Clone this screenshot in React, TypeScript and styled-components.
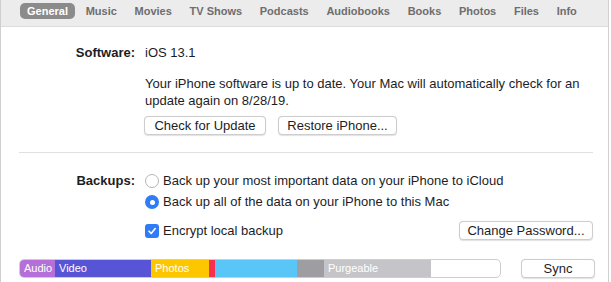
import styled, { createGlobalStyle } from 'styled-components';

const GlobalStyle = createGlobalStyle`
  html, body {
    margin: 0;
    padding: 0;
    background: #ffffff;
  }
  body {
    font-family: 'Liberation Sans', Arial, sans-serif;
    color: #1d1d1f;
  }
`;

const Window = styled.div`
  width: 607px;
  height: 282px;
  border-left: 1px solid #cfcfcf;
  border-right: 1px solid #cfcfcf;
  background: #ffffff;
  overflow: hidden;
`;

const TabBar = styled.div`
  height: 27px;
  background: #ececec;
  border-bottom: 1px solid #dcdcdc;
  display: flex;
  align-items: flex-start;
  padding: 3px 0 0 19px;
  box-sizing: border-box;
  gap: 3.7px;
`;

const Tab = styled.div<{ $active?: boolean }>`
  height: 16px;
  line-height: 16px;
  padding: 0 7px;
  border-radius: 5px;
  font-size: 11px;
  font-weight: bold;
  white-space: nowrap;
  color: ${(p) => (p.$active ? '#ffffff' : '#6e6e6e')};
  background: ${(p) => (p.$active ? '#8b8b8b' : 'transparent')};
`;

const Content = styled.div`
  padding: 0 15px 0 18px;
`;

const Section = styled.div<{ $top?: number }>`
  display: grid;
  grid-template-columns: 116px 1fr;
  column-gap: 10px;
  font-size: 13px;
  margin-top: ${(p) => p.$top ?? 0}px;
`;

const Label = styled.div`
  font-weight: bold;
  text-align: right;
  line-height: 16px;
`;

const Stack = styled.div`
  display: flex;
  flex-direction: column;
`;

const Line = styled.div`
  line-height: 16px;
`;

const Paragraph = styled.div`
  line-height: 17px;
  margin-top: 14px;
`;

const ButtonRow = styled.div`
  display: flex;
  gap: 12px;
  margin-top: 7px;
  margin-left: -1px;
`;

const Button = styled.div<{ $width: number }>`
  width: ${(p) => p.$width}px;
  flex: none;
  height: 19px;
  box-sizing: border-box;
  border: 1px solid #cdcdcd;
  border-radius: 4px;
  background: #ffffff;
  box-shadow: 0 0.5px 1px rgba(0, 0, 0, 0.12);
  font-size: 13px;
  line-height: 17px;
  text-align: center;
  color: #1d1d1f;
`;

const Divider = styled.div`
  height: 1px;
  background: #e0e0e0;
  margin: 17px 0 20px 0;
`;

const OptionRow = styled.div<{ $gap?: number }>`
  display: flex;
  align-items: center;
  gap: 4px;
  height: 16px;
  margin-top: ${(p) => p.$gap ?? 0}px;
  line-height: 16px;
`;

const Radio = styled.div<{ $checked?: boolean }>`
  width: 14px;
  height: 14px;
  box-sizing: border-box;
  border-radius: 50%;
  border: ${(p) => (p.$checked ? 'none' : '1px solid #b5b5b5')};
  background: ${(p) => (p.$checked ? '#2f7cf6' : '#ffffff')};
  display: flex;
  align-items: center;
  justify-content: center;
  &::after {
    content: '';
    display: ${(p) => (p.$checked ? 'block' : 'none')};
    width: 5px;
    height: 5px;
    border-radius: 50%;
    background: #ffffff;
  }
`;

const Check = styled.div`
  width: 14px;
  height: 14px;
  border-radius: 3px;
  background: #2f7cf6;
  display: flex;
  align-items: center;
  justify-content: center;
`;

const EncryptRow = styled.div`
  display: flex;
  align-items: center;
  justify-content: space-between;
  margin-top: 11px;
  height: 19px;
`;

const Footer = styled.div`
  display: flex;
  align-items: center;
  gap: 20px;
  margin-top: 19px;
`;

const Storage = styled.div`
  width: 482px;
  flex: none;
  height: 19px;
  box-sizing: border-box;
  border: 1px solid #cdcdcd;
  border-radius: 5px;
  overflow: hidden;
  display: flex;
  background: #ffffff;
`;

const Segment = styled.div<{ $color: string; $width: number }>`
  width: ${(p) => p.$width}px;
  flex: none;
  background: ${(p) => p.$color};
  color: #ffffff;
  font-size: 11px;
  line-height: 17px;
  padding-left: 4px;
  box-sizing: border-box;
  white-space: nowrap;
  overflow: hidden;
`;

const tabs = ['General', 'Music', 'Movies', 'TV Shows', 'Podcasts', 'Audiobooks', 'Books', 'Photos', 'Files', 'Info'];

const segments = [
  { label: 'Audio', color: '#b46fd8', width: 35 },
  { label: 'Video', color: '#5755d5', width: 96 },
  { label: 'Photos', color: '#fdc700', width: 58 },
  { label: '', color: '#f8304f', width: 6 },
  { label: '', color: '#5ac6f8', width: 82 },
  { label: '', color: '#9d9da2', width: 27 },
  { label: 'Purgeable', color: '#c5c5c9', width: 107 },
];

export default function App() {
  return (
    <Window>
      <GlobalStyle />
      <TabBar>
        {tabs.map((t) => (
          <Tab key={t} $active={t === 'General'}>
            {t}
          </Tab>
        ))}
      </TabBar>
      <Content>
        <Section $top={18}>
          <Label>Software:</Label>
          <Stack>
            <Line>iOS 13.1</Line>
            <Paragraph>
              Your iPhone software is up to date. Your Mac will automatically check for an
              <br />
              update again on 8/28/19.
            </Paragraph>
            <ButtonRow>
              <Button $width={122}>Check for Update</Button>
              <Button $width={119}>Restore iPhone...</Button>
            </ButtonRow>
          </Stack>
        </Section>
        <Divider />
        <Section>
          <Label>Backups:</Label>
          <Stack>
            <OptionRow>
              <Radio />
              <span>Back up your most important data on your iPhone to iCloud</span>
            </OptionRow>
            <OptionRow $gap={5}>
              <Radio $checked />
              <span>Back up all of the data on your iPhone to this Mac</span>
            </OptionRow>
            <EncryptRow>
              <OptionRow>
                <Check>
                  <svg width="10" height="10" viewBox="0 0 10 10">
                    <path d="M2 5.2 L4.2 7.4 L8.2 2.6" fill="none" stroke="#fff" strokeWidth="1.6" strokeLinecap="round" strokeLinejoin="round" />
                  </svg>
                </Check>
                <span>Encrypt local backup</span>
              </OptionRow>
              <Button $width={134}>Change Password...</Button>
            </EncryptRow>
          </Stack>
        </Section>
        <Footer>
          <Storage>
            {segments.map((s, i) => (
              <Segment key={i} $color={s.color} $width={s.width}>
                {s.label}
              </Segment>
            ))}
          </Storage>
          <Button $width={74}>Sync</Button>
        </Footer>
      </Content>
    </Window>
  );
}
